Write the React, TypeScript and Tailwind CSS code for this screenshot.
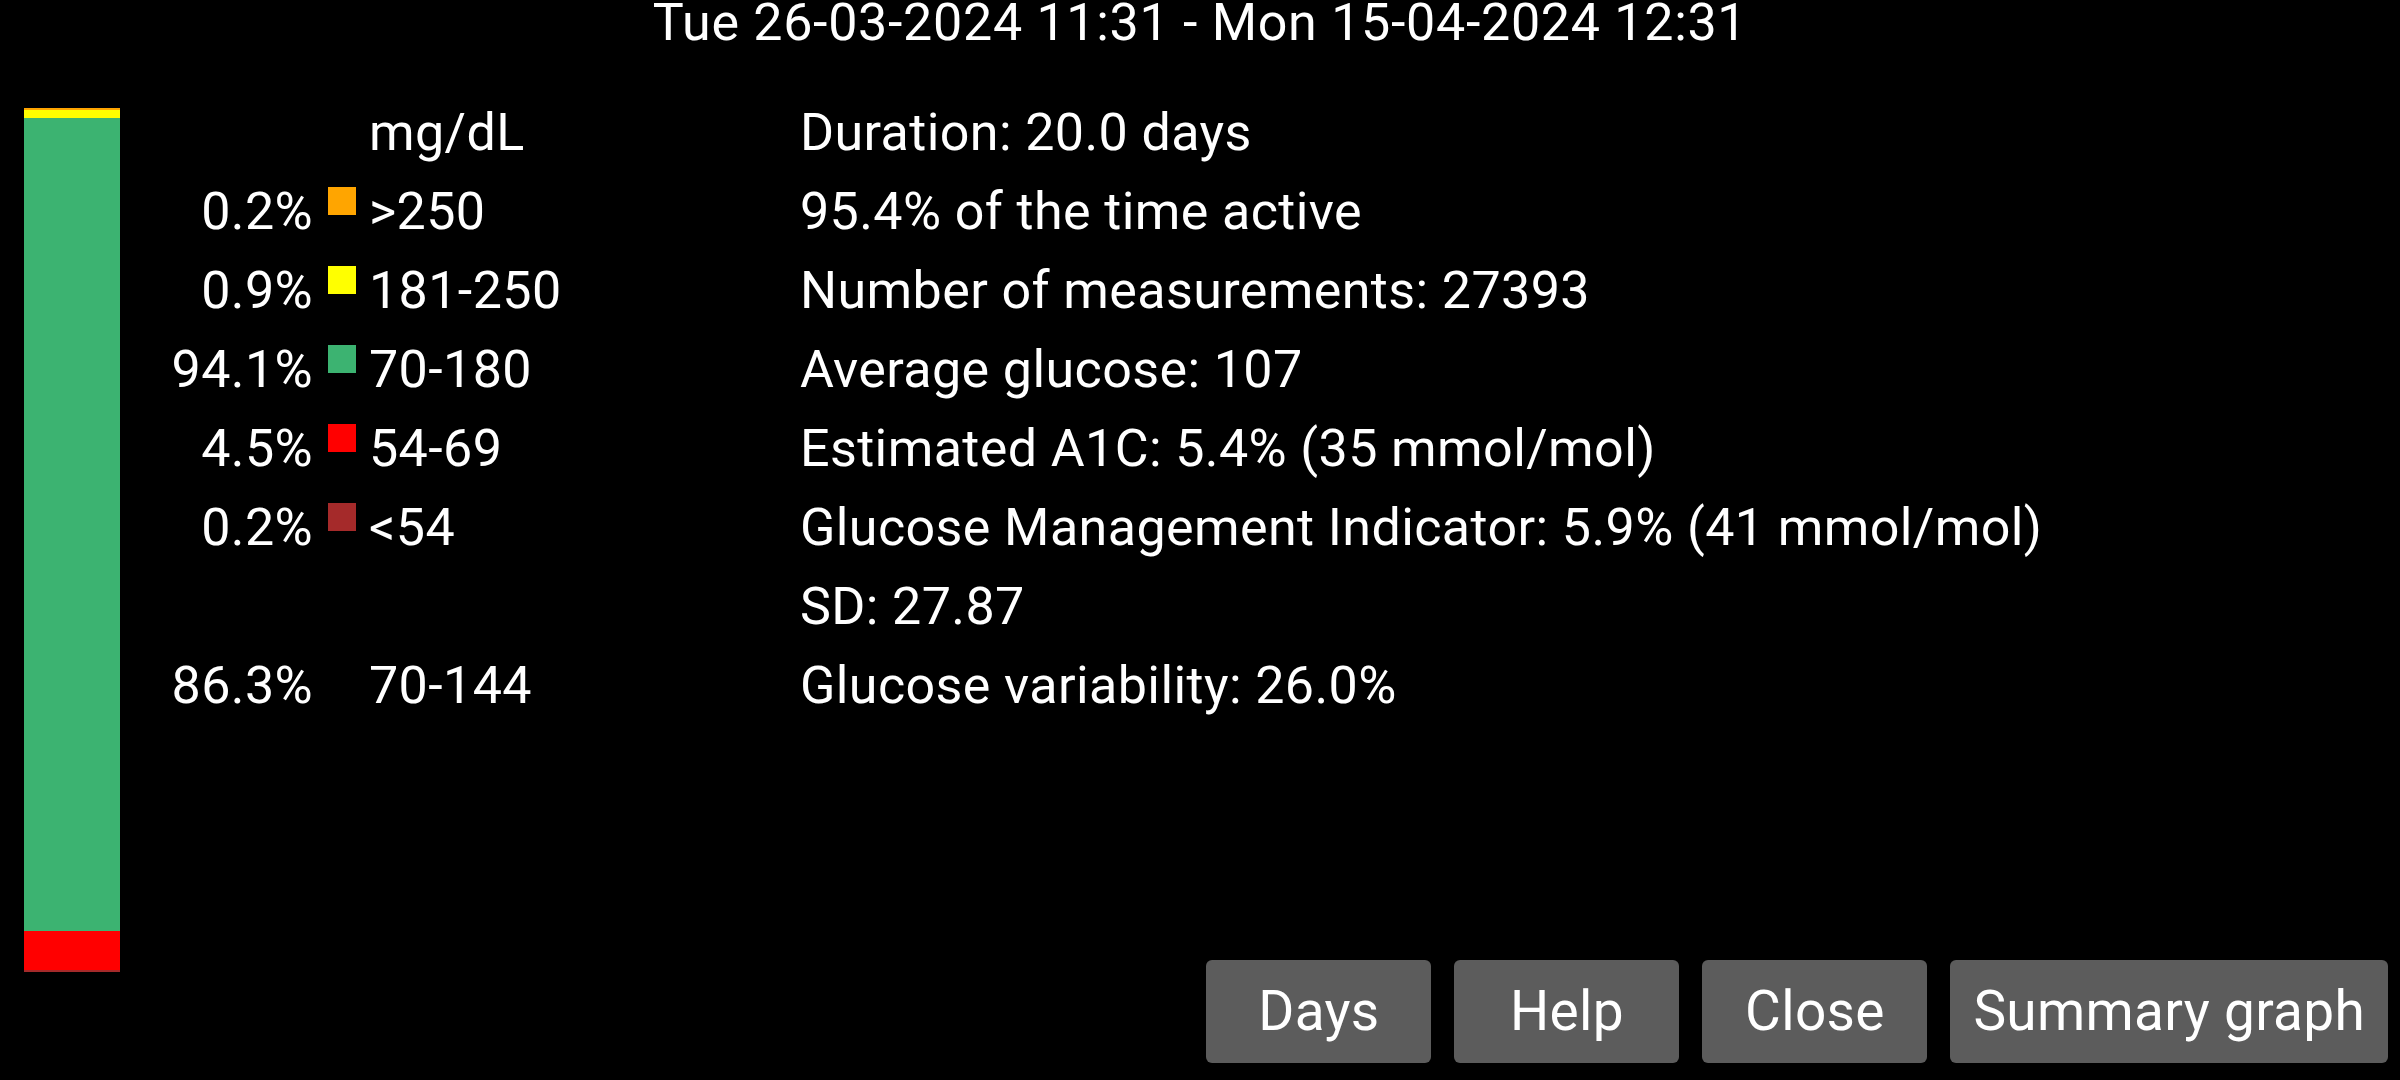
import React from 'react';

type Band = { pct: string; color: string; range: string };

const bands: Band[] = [
  { pct: '0.2%', color: 'bg-[#ffa500]', range: '>250' },
  { pct: '0.9%', color: 'bg-[#ffff00]', range: '181-250' },
  { pct: '94.1%', color: 'bg-[#3cb371]', range: '70-180' },
  { pct: '4.5%', color: 'bg-[#ff0000]', range: '54-69' },
  { pct: '0.2%', color: 'bg-[#a52a2a]', range: '<54' },
];

const stats = [
  'Duration: 20.0 days',
  '95.4% of the time active',
  'Number of measurements: 27393',
  'Average glucose: 107',
  'Estimated A1C: 5.4% (35 mmol/mol)',
  'Glucose Management Indicator: 5.9% (41 mmol/mol)',
  'SD: 27.87',
  'Glucose variability: 26.0%',
];

const Row: React.FC<{ pct?: string; color?: string; range: string }> = ({ pct, color, range }) => (
  <div className="flex h-[79px] items-start">
    <span className="w-[193px] text-right">{pct}</span>
    <span className={`ml-[15px] mt-[15px] h-[28px] w-[28px] ${color ?? ''}`} />
    <span className="ml-[13px]">{range}</span>
  </div>
);

const Button: React.FC<{ label: string }> = ({ label }) => (
  <button className="h-[103px] min-w-[225px] rounded-[6px] bg-[#5c5c5c] px-[23px] text-[55px] leading-[103px] tracking-[0.3px] text-white">
    {label}
  </button>
);

export default function App() {
  return (
    <div className="flex h-[1080px] w-[2400px] flex-col overflow-hidden bg-black font-['Roboto',sans-serif] text-[52px] tracking-[0.4px] text-white">
      <div className="h-[46px] text-center leading-[46px] tracking-[0.7px]">Tue 26-03-2024 11:31 - Mon 15-04-2024 12:31</div>

      <div className="flex flex-1 pb-[17px] pr-[12px]">
        {/* time in range bar */}
        <div className="ml-[24px] mt-[62px] flex h-[864px] w-[96px] flex-col">
          <div className="h-[2px] bg-[#ffa500]" />
          <div className="h-[8px] bg-[#ffff00]" />
          <div className="flex-1 bg-[#3cb371]" />
          <div className="h-[39px] bg-[#ff0000]" />
          <div className="h-[2px] bg-[#a52a2a]" />
        </div>

        <div className="mt-[47px] w-[680px] leading-[79px]">
          <Row range="mg/dL" />
          {bands.map((b, i) => (
            <Row key={i} pct={b.pct} color={b.color} range={b.range} />
          ))}
          <Row range="" />
          <Row pct="86.3%" range="70-144" />
        </div>

        <div className="flex flex-1 flex-col">
          <div className="mt-[47px] leading-[79px]">
            {stats.map((s) => (
              <div key={s} className="h-[79px]">{s}</div>
            ))}
          </div>
          <div className="mt-auto flex justify-end gap-[23px]">
            <Button label="Days" />
            <Button label="Help" />
            <Button label="Close" />
            <Button label="Summary graph" />
          </div>
        </div>
      </div>
    </div>
  );
}
